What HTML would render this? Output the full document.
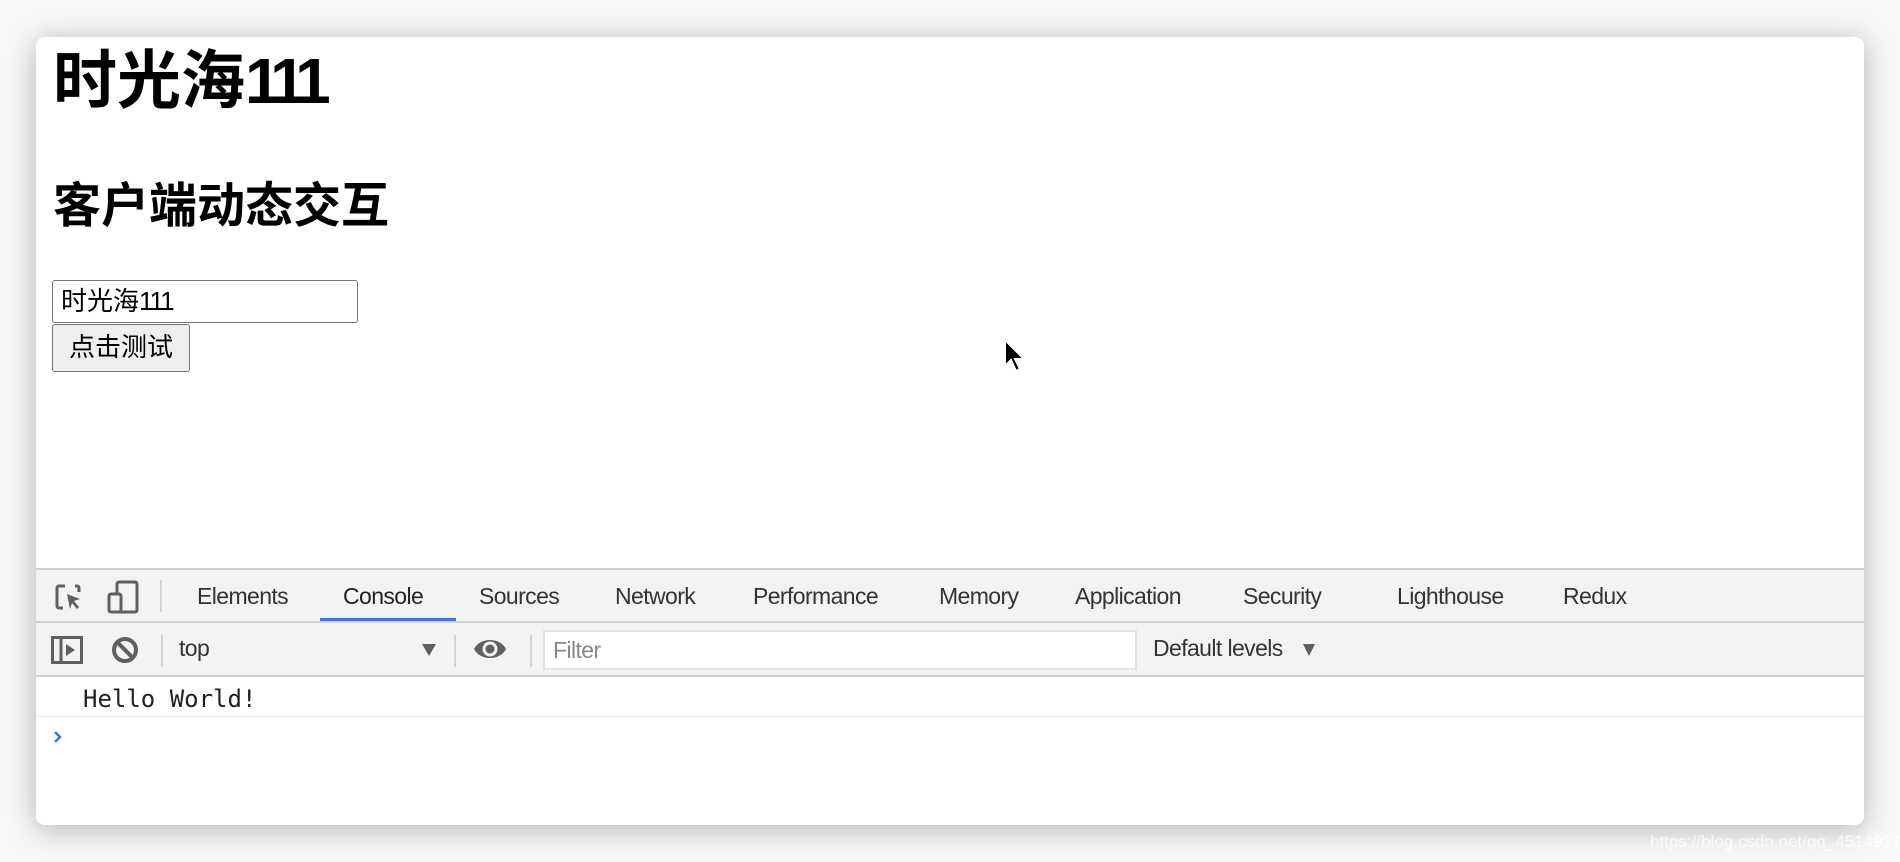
<!DOCTYPE html>
<html><head><meta charset="utf-8"><style>
*{margin:0;padding:0;box-sizing:border-box}
body{width:1900px;height:862px;background:#f7f7f7;position:relative;overflow:hidden;font-family:"Liberation Sans","Noto Sans CJK SC",sans-serif}
.win{position:absolute;left:36px;top:37px;width:1828px;height:788px;background:#fff;border-radius:9px;box-shadow:0 4px 28px rgba(0,0,0,.28);overflow:hidden}
.a{position:absolute;white-space:nowrap}
.h1{left:17px;top:4px;font-size:64px;font-weight:bold;color:#000;line-height:80px}
.h1 span{letter-spacing:-7px}
.h2{left:17px;top:138px;font-size:48px;font-weight:bold;color:#000;line-height:64px}
.inp{left:16px;top:243px;width:306px;height:43px;border:1.5px solid #767676;border-radius:3px;font-size:26px;line-height:40px;padding-left:8px;color:#000}
.inp span{letter-spacing:-2px}
.btn{left:16px;top:287px;width:138px;height:48px;border:1.5px solid #767676;border-radius:3px;background:#efefef;font-size:26px;line-height:44px;text-align:center;color:#000}
.tabs{left:0;top:531px;width:100%;height:55px;background:#f3f3f3;border-top:2px solid #cfcfcf;border-bottom:2px solid #cfcfcf}
.tb{left:0;top:586px;width:100%;height:54px;background:#f3f3f3;border-bottom:2px solid #cfcfcf}
.t{font-size:23px;color:#333;top:13px;letter-spacing:-0.6px}
.sep{position:absolute;width:2px;background:#d3d3d3}
</style></head><body>
<div class="win">
<div class="a h1">时光海<span>111</span></div>
<div class="a h2">客户端动态交互</div>
<div class="a inp">时光海<span>111</span></div>
<div class="a btn">点击测试</div>
<svg class="a" style="left:967px;top:301px" width="24" height="36" viewBox="0 0 24 36"><path d="M2 2 L2 28 L8 22 L13 33 L17 31 L12 21 L21 21 Z" fill="#000" stroke="#fff" stroke-width="2"/></svg>
<div class="a tabs">
 <svg class="a" style="left:19px;top:14px" width="28" height="28" viewBox="0 0 28 28"><path d="M10 2H4a2 2 0 0 0-2 2v18a2 2 0 0 0 2 2h4" fill="none" stroke="#5f5f5f" stroke-width="3"/><path d="M20 2h2a2 2 0 0 1 2 2v4" fill="none" stroke="#5f5f5f" stroke-width="3"/><path d="M12 10l13 5-6 2 5 6-2 2-5-6-2 6z" fill="#5f5f5f"/></svg>
 <svg class="a" style="left:71px;top:10px" width="32" height="34" viewBox="0 0 32 34"><rect x="10" y="2" width="20" height="30" rx="2" fill="none" stroke="#5f5f5f" stroke-width="3"/><rect x="2" y="14" width="12" height="18" rx="2" fill="#f3f3f3" stroke="#5f5f5f" stroke-width="3"/></svg>
 <div class="sep" style="left:124px;top:10px;height:32px"></div>
 <div class="a t" style="left:161px">Elements</div>
 <div class="a t" style="left:307px;color:#222">Console</div>
 <div class="a" style="left:284px;top:48px;width:136px;height:3px;background:#3b78e7"></div>
 <div class="a t" style="left:443px">Sources</div>
 <div class="a t" style="left:579px">Network</div>
 <div class="a t" style="left:717px">Performance</div>
 <div class="a t" style="left:903px">Memory</div>
 <div class="a t" style="left:1039px">Application</div>
 <div class="a t" style="left:1207px">Security</div>
 <div class="a t" style="left:1361px">Lighthouse</div>
 <div class="a t" style="left:1527px">Redux</div>
</div>
<div class="a tb">
 <svg class="a" style="left:15px;top:13px" width="32" height="28" viewBox="0 0 32 28"><rect x="1.5" y="1.5" width="29" height="25" fill="none" stroke="#5f5f5f" stroke-width="3"/><line x1="10" y1="2" x2="10" y2="26" stroke="#5f5f5f" stroke-width="3"/><path d="M15 8l9 6-9 6z" fill="#5f5f5f"/></svg>
 <svg class="a" style="left:75px;top:13px" width="28" height="28" viewBox="0 0 28 28"><circle cx="14" cy="14" r="11" fill="none" stroke="#5f5f5f" stroke-width="4"/><line x1="7" y1="7" x2="21" y2="21" stroke="#5f5f5f" stroke-width="4"/></svg>
 <div class="sep" style="left:125px;top:12px;height:32px"></div>
 <div class="a t" style="left:143px;top:12px">top</div>
 <svg class="a" style="left:385px;top:20px" width="16" height="14"><path d="M1 1h14L8 13z" fill="#5f5f5f"/></svg>
 <div class="sep" style="left:418px;top:12px;height:32px"></div>
 <svg class="a" style="left:437px;top:12px" width="34" height="28" viewBox="0 0 34 28"><path d="M1 14C7 2 27 2 33 14 27 26 7 26 1 14z" fill="#5f5f5f"/><circle cx="17" cy="14" r="7.5" fill="#f3f3f3"/><circle cx="17" cy="14" r="4.5" fill="#5f5f5f"/></svg>
 <div class="sep" style="left:494px;top:12px;height:32px"></div>
 <div class="a" style="left:507px;top:7px;width:594px;height:40px;background:#fff;border:2px solid #e3e3e3"></div>
 <div class="a t" style="left:517px;top:14px;color:#888">Filter</div>
 <div class="a t" style="left:1117px;top:12px">Default levels</div>
 <svg class="a" style="left:1266px;top:20px" width="14" height="14"><path d="M1 1h12L7 13z" fill="#5f5f5f"/></svg>
</div>
<div class="a" style="left:47px;top:648px;font-family:'DejaVu Sans Mono','Liberation Mono',monospace;font-size:24px;color:#222">Hello World!</div>
<div class="a" style="left:0;top:679px;width:100%;height:1px;background:#eee"></div>
<svg class="a" style="left:17px;top:693px" width="10" height="14"><path d="M2 2l5 5-5 5" fill="none" stroke="#3b78e7" stroke-width="2.5"/></svg>
</div>
<div class="a" style="left:1650px;top:832px;font-size:17px;color:#fff;opacity:.8">https://blog.csdn.net/qq_4514927</div>
</body></html>
